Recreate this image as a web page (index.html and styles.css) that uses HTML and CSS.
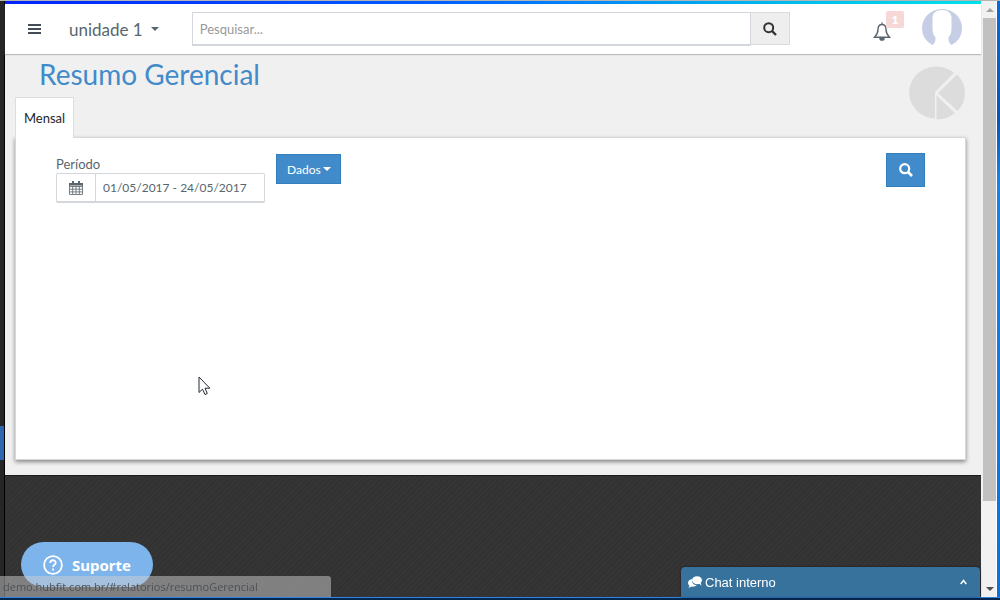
FILE: index.html
```html
<!DOCTYPE html>
<html lang="pt-BR">
<head>
    <meta charset="UTF-8">
    <meta name="viewport" content="width=device-width, initial-scale=1.0">
    <title>Resumo Gerencial</title>
    <link rel="stylesheet" href="styles.css">
</head>
<body>
    <div class="window">
        <div class="edge-left"></div>

        <div class="page">
            <div class="progress-bar"></div>

            <!-- Top bar -->
            <header class="topbar">
                <button class="menu-button" type="button" aria-label="Menu">
                    <svg width="13" height="12" viewBox="0 0 13 12"><path d="M0 2h13M0 6h13M0 10h13" stroke="#444d55" stroke-width="2"/></svg>
                </button>
                <button class="unit-button" type="button">unidade 1 <span class="caret"></span></button>
                <form class="search">
                    <input type="text" placeholder="Pesquisar..." aria-label="Pesquisar">
                    <button type="button" aria-label="Buscar">
                        <svg width="14" height="14" viewBox="0 0 14 14" fill="none" stroke="#333" stroke-width="2"><circle cx="5.7" cy="5.7" r="4.5"/><path d="M9 9l4 4" stroke-width="2.4"/></svg>
                    </button>
                </form>
                <button class="bell-button" type="button" aria-label="Notificações">
                    <svg width="18" height="19" viewBox="0 0 18 19" fill="none" stroke="#5d666e" stroke-width="1.4"><path d="M9 .5v2M1.500 15.200C4 12.800 5 10.500 5 7.600C5 4.300 6.500 2.500 9 2.500s4 1.800 4 5.100c0 2.900 1 5.200 3.500 7.600z"/><path d="M7 16.200a2 1.900 0 0 0 4 0z" fill="#5d666e"/></svg>
                    <span class="badge">1</span>
                </button>
                <svg class="avatar" width="40" height="37" viewBox="0 0 40 37">
                    <path d="M10.500 36A20 19 0 0 1 0 19A20 19 0 0 1 40 19A20 19 0 0 1 29.500 36C27 34.500 26.300 31.500 26.500 28.500C29 26 29.500 23 29.500 18V9C29.500 4 26 1 20 1S10.500 4 10.500 9v9c0 5 .5 8 3 10.500C13.700 31.500 13 34.500 10.500 36z" fill="#c5cee5"/>
                </svg>
            </header>

            <!-- Report -->
            <main class="content">
                <div class="content-head">
                    <div>
                        <h1>Resumo Gerencial</h1>
                        <nav class="tabs"><a href="#mensal">Mensal</a></nav>
                    </div>
                    <svg class="pie" width="58" height="54" viewBox="0 0 58 54" fill="#dcdcdc">
                        <path d="M27 27V52.500A27 26 0 1 1 46 7L27 26z"/>
                        <path d="M30 27L49 8.500Q57 16 57 27Q57 37 49.500 45z"/>
                        <path d="M28.500 29.500L47 47Q39 53.500 28.500 53.500z"/>
                    </svg>
                </div>
                <section class="panel">
                    <div class="field">
                        <label for="periodo">Período</label>
                        <div class="input-group">
                            <span class="addon">
                                <svg width="14" height="14" viewBox="0 0 14 14"><path d="M.5 2.500h13v11H.5zM.5 5.500h13M.5 8.200h13M.5 10.900h13M3.700 5v8.500M7 5v8.500M10.300 5v8.500" fill="none" stroke="#59636b" stroke-width=".8"/><path d="M0 2h14v2.500H0zM3 0h2v3H3zM9 0h2v3H9z" fill="#59636b"/></svg>
                            </span>
                            <input type="text" id="periodo" value="01/05/2017 - 24/05/2017">
                        </div>
                    </div>
                    <button class="btn btn-dados" type="button">Dados <span class="caret"></span></button>
                    <button class="btn btn-search" type="button" aria-label="Filtrar">
                        <svg width="14" height="14" viewBox="0 0 14 14" fill="none" stroke="#fff" stroke-width="2.200"><circle cx="5.700" cy="5.700" r="4.500"/><path d="M9 9l4 4" stroke-width="2.600"/></svg>
                    </button>
                </section>
            </main>

            <footer class="footer"></footer>
        </div>

        <!-- Scrollbar -->
        <div class="scrollbar">
            <span class="arrow arrow-up"></span>
            <div class="track"><div class="thumb"></div></div>
            <span class="arrow arrow-down"></span>
        </div>
        <div class="edge-right"></div>
    </div>
    <div class="edge-bottom"></div>

    <!-- Floating items -->
    <button class="support" type="button">
        <svg width="20" height="20" viewBox="0 0 20 20" fill="none" stroke="#fff" stroke-width="1.800"><circle cx="10" cy="10" r="8.900"/><path d="M7.300 8C7.300 4.400 12.700 4.400 12.700 7.700C12.700 9.800 10 9.800 10 12"/><path d="M10 13.500v2"/></svg>
        Suporte
    </button>
    <div class="link-status">demo.hubfit.com.br/#relatorios/resumoGerencial</div>
    <button class="chat" type="button">
        <svg width="14" height="12" viewBox="0 0 14 12" fill="#fff"><path d="M4 3C1.800 3.400 0 4.800 0 6.800c0 1.200.6 2.200 1.500 2.900L.5 11.500c1.300 0 2.300-.5 3-1c2 .4 4-.1 5.200-1.300C6 9.200 3.200 7 4 3z"/><ellipse cx="9" cy="4.200" rx="4.900" ry="4"/><path d="M10.500 7l3 2.700L12.500 6z"/></svg>
        <span>Chat interno</span>
        <svg class="chat-toggle" width="7" height="6" viewBox="0 0 7 6"><path d="M.7 5L3.500 1.500L6.300 5" fill="none" stroke="#fff" stroke-width="1.500"/></svg>
    </button>
    <svg class="cursor" width="13" height="20" viewBox="0 0 13 20"><path d="M1 1v15.500l3.500-3.300L7 18.500l2.300-1L7 12.200h4.800z" fill="#fff" stroke="#222936"/></svg>
</body>
</html>
```
FILE: styles.css
```css
* {
    box-sizing: border-box;
}
body {
    margin: 0;
    height: 100vh;
    display: flex;
    flex-direction: column;
    border-top: 1px solid #b5b5b5;
    font-family: Lato, "Open Sans", sans-serif;
    font-size: 14px;
    color: #58666e;
    overflow: hidden;
}
button, input {
    font: inherit;
    color: inherit;
}
button {
    display: flex;
    align-items: center;
    justify-content: center;
    border: 0;
    padding: 0;
    background: none;
    cursor: pointer;
}
svg {
    display: block;
    flex-shrink: 0;
}

/* Window frame */
.window {
    flex: 1;
    display: flex;
    min-height: 0;
}
.edge-left {
    width: 5px;
    border-right: 1px solid #000;
    background: linear-gradient(#262626 425px, #2d66b0 425px, #2d66b0 459px, #262626 459px);
}
.edge-right {
    width: 3px;
    background: linear-gradient(#0a6ad8, #0a55b5 20%, #1683e8 30%, #0b70dc);
}
.edge-bottom {
    height: 3px;
    border-top: 1px solid #2f86dd;
    background: #06264e;
}
.page {
    flex: 1;
    min-width: 0;
    display: flex;
    flex-direction: column;
}
.progress-bar {
    height: 3px;
    background: linear-gradient(90deg, #0022ff, #0060ff 45%, #00b0f0 75%, #00e0e8);
}

/* Top bar */
.topbar {
    position: relative;
    z-index: 1;
    display: flex;
    align-items: center;
    height: 50px;
    padding: 0 19px 0 23px;
    background: #fff;
    box-shadow: 0 1px 1px #bbb;
}
.unit-button {
    margin-left: 28px;
    gap: 8px;
    font-size: 17px;
}
.caret {
    border: 4px solid transparent;
    border-top-color: currentColor;
    border-bottom: 0;
}
.search {
    flex: 1;
    display: flex;
    height: 34px;
    margin: 0 83px 0 33px;
}
.search input {
    flex: 1;
    min-width: 0;
    padding: 0 7px;
    border: 1px solid #d3d6dc;
    border-bottom-width: 2px;
    font-size: 13px;
}
.search input::placeholder {
    color: #999;
}
.search button {
    width: 39px;
    height: 33px;
    border: 1px solid #dadada;
    border-left: 0;
    background: #eee;
}
.bell-button {
    position: relative;
    margin: 4px 31px 0 0;
}
.badge {
    position: absolute;
    left: 13px;
    top: -11px;
    width: 18px;
    height: 17px;
    border-radius: 2px;
    background: #f6d9d6;
    color: #fff;
    font-size: 12px;
    font-weight: 900;
    line-height: 17px;
    text-align: center;
}
.avatar {
    margin-bottom: 4px;
}

/* Report */
.content {
    flex: 1;
    display: flex;
    flex-direction: column;
    padding: 0 15px 15px 10px;
    background: #f0f0f0;
}
.content-head {
    display: flex;
    justify-content: space-between;
    align-items: flex-start;
}
h1 {
    margin: 3px 0 6px 24px;
    color: #428bca;
    font-size: 28px;
    font-weight: 400;
    line-height: 34px;
}
.tabs a {
    position: relative;
    z-index: 1;
    display: inline-block;
    margin-bottom: -1px;
    padding: 0 8px;
    border: 1px solid #ddd;
    border-bottom: 0;
    background: #fff;
    color: #22262a;
    font-size: 13px;
    line-height: 40px;
    text-decoration: none;
    vertical-align: top;
}
.pie {
    margin-top: 12px;
}
.panel {
    flex: 1;
    display: flex;
    align-items: flex-start;
    padding: 15px 40px;
    border: 1px solid #d5d7db;
    background: #fff;
    box-shadow: 0 2px 4px #888;
}
.field {
    width: 209px;
    margin: 3px 11px 0 0;
}
.field label {
    display: block;
    font-size: 13px;
    line-height: 17px;
}
.input-group {
    display: flex;
    height: 30px;
    border: 1px solid #d3d6da;
    border-bottom-width: 2px;
    border-radius: 2px;
}
.addon {
    display: flex;
    align-items: center;
    justify-content: center;
    width: 39px;
    border-right: 1px solid #d3d6da;
}
.input-group input {
    flex: 1;
    min-width: 0;
    padding: 0 7px;
    border: 0;
    font-size: 12px;
}
.btn {
    border: 1px solid #357ebd;
    background: #428bca;
    color: #fff;
}
.btn-dados {
    gap: 2px;
    height: 30px;
    margin-top: 1px;
    padding: 0 9px 0 10px;
    font-size: 12px;
}
.btn-search {
    width: 39px;
    height: 34px;
    margin-left: auto;
}
.footer {
    height: 122px;
    border-top: 1px solid #1c1c1c;
    background: repeating-linear-gradient(135deg, #313131 0, #363636 2px, #313131 4px);
}

/* Scrollbar */
.scrollbar {
    display: flex;
    flex-direction: column;
    align-items: center;
    width: 16px;
    padding-left: 2px;
    border-right: 1px solid #fff;
    background: #f1f1f1;
}
.track {
    flex: 1;
    width: 13px;
}
.thumb {
    height: 86%;
    background: #c1c1c1;
}
.arrow {
    margin: 7px 0 6px;
    border: 4px solid transparent;
}
.arrow-up {
    border-top: 0;
    border-bottom-color: #a3a3a3;
}
.arrow-down {
    border-bottom: 0;
    border-top-color: #505050;
}

/* Floating items */
.support {
    position: fixed;
    left: 21px;
    bottom: 13px;
    gap: 9px;
    height: 45px;
    padding: 0 22px;
    border-radius: 23px;
    background: #7db4ec;
    color: #fff;
    font-family: "Noto Sans", sans-serif;
    font-size: 15px;
    font-weight: 700;
}
.link-status {
    position: fixed;
    left: 0;
    bottom: 3px;
    width: 331px;
    height: 21px;
    padding-left: 3px;
    border-radius: 0 3px 0 0;
    background: rgba(205, 205, 205, 0.5);
    color: #4d5257;
    font-family: "Open Sans", sans-serif;
    font-size: 11px;
    line-height: 21px;
    white-space: nowrap;
}
.chat {
    position: fixed;
    right: 20px;
    bottom: 3px;
    justify-content: flex-start;
    gap: 3px;
    width: 299px;
    height: 30px;
    padding: 0 13px 0 7px;
    border-radius: 4px 4px 0 0;
    background: #37729c;
    box-shadow: 0 0 2px #111;
    color: #fff;
    font-family: "Liberation Sans", Arial, sans-serif;
    font-size: 13px;
}
.chat-toggle {
    margin-left: auto;
}
.cursor {
    position: fixed;
    left: 198px;
    top: 376px;
}
```
